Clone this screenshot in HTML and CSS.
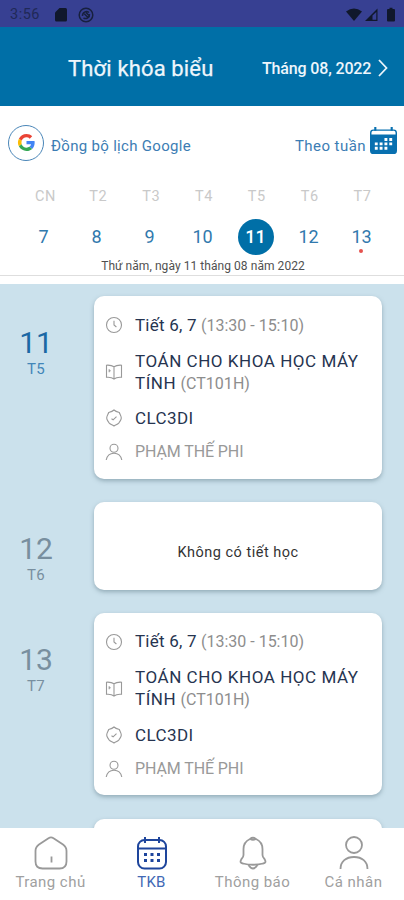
FILE: index.html
```
<!DOCTYPE html>
<html lang="vi">
<head>
<meta charset="utf-8">
<title>Thời khóa biểu</title>
<link rel="stylesheet" href="styles.css">
</head>
<body>
<svg class="defs" width="0" height="0">
  <symbol id="clock" viewBox="0 0 18 18"><circle cx="9" cy="9" r="7.5"/><path d="M9 4.8V9l2.4 2"/></symbol>
  <symbol id="book" viewBox="0 0 18 18"><path d="M9 3.8C7 2.4 4.500 2 1.500 2.200V14.300C4.500 14 7 14.400 9 16C11 14.400 13.500 14 16.500 14.300V2.200C13.500 2 11 2.400 9 3.800ZM9 3.800V16M4.200 6.300v3M4.200 7.800h1.500"/></symbol>
  <symbol id="badge" viewBox="0 0 18 18"><path d="M9 1C10.500 2.500 12.300 3 14.300 3.500C15 5.500 16.300 7 16.300 9C16.300 11 15 12 14 13.800C12.500 15.500 10.500 16 9 17C7.500 16 5.500 15.500 4 13.800C3 12 1.700 11 1.700 9C1.700 7 3 5.500 3.700 3.500C5.700 3 7.500 2.500 9 1ZM6.500 9.800l1.600 1L11.500 7.600"/></symbol>
  <symbol id="person" viewBox="0 0 18 18"><circle cx="9" cy="5.300" r="4"/><path d="M1.200 17C2.100 12.800 5.100 10.300 9 10.300S15.900 12.800 16.800 17"/></symbol>
</svg>
<div class="app">
  <div class="status">
    <span class="time">3:56</span>
    <svg class="sd" viewBox="0 0 12 14"><path d="M4.500 0H10.500Q12 0 12 1.500V12Q12 13.500 10.500 13.500H1.500Q0 13.500 0 12V4.500Z"/></svg>
    <svg class="sync" viewBox="0 0 16 16"><circle cx="8" cy="8" r="6.800"/><path d="M4.500 9A4 4 0 0 1 11 5.500M11.500 7A4 4 0 0 1 5.500 11M5.500 6l5 5M8 5.500l3 3"/></svg>
    <svg class="signals" viewBox="0 0 50 16"><path d="M0 4.500Q8 -1.500 16 4.500L8 14Z"/><path d="M19 14L31.500 1.500V14Z"/><path class="cut" d="M26.500 8.500L30.300 5V12.800H26.500Z"/><path d="M42 2h1.500V.800h3V2H48q1 0 1 1V13.500q0 1-1 1h-6q-1 0-1-1V3q0-1 1-1Z"/></svg>
  </div>
  <header class="header">
    <h1>Thời khóa biểu</h1>
    <span class="month">Tháng 08, 2022</span>
    <svg class="chevron" viewBox="0 0 10 18"><path d="M1 1l7.500 8L1 17"/></svg>
  </header>
  <section class="calendar">
    <div class="tools">
      <span class="google"><svg viewBox="0 0 48 48"><path fill="#ea4335" d="M24 9.500c3.500 0 6.700 1.200 9.200 3.600l6.900-6.900C35.900 2.400 30.500 0 24 0 14.600 0 6.500 5.400 2.600 13.200l8 6.200C12.400 13.700 17.700 9.500 24 9.500z"/><path fill="#4285f4" d="M47 24.600c0-1.600-.2-3.100-.4-4.600H24v9h12.900c-.6 3-2.200 5.500-4.700 7.200l7.700 6C44.400 38 47 31.800 47 24.600z"/><path fill="#fbbc05" d="M10.500 28.600a14.500 14.500 0 0 1 0-9.200l-8-6.200a24 24 0 0 0 0 21.600z"/><path fill="#34a853" d="M24 48c6.500 0 11.900-2.100 15.900-5.800l-7.700-6c-2.200 1.500-4.900 2.300-8.200 2.300-6.300 0-11.600-4.200-13.500-9.900l-8 6.200C6.500 42.600 14.600 48 24 48z"/></svg></span>
      <span class="sync-label">Đồng bộ lịch Google</span>
      <span class="week-label">Theo tuần</span>
      <svg class="cal-icon" viewBox="0 0 28 28"><rect x="0" y="2.500" width="28" height="25.500" rx="3.500" fill="#0870b0"/><path d="M1.500 7.800V6q0-2 2-2H24.500q2 0 2 2V7.800Z" fill="#fff"/><path d="M5.500 0V4M22.500 0V4" stroke="#0870b0" stroke-width="2.200"/><path d="M15 11.500h3v3h-3zM20 11.500h3v3h-3zM5 16h3v3H5zM10 16h3v3h-3zM15 16h3v3h-3zM20 16h3v3h-3zM5 20.500h3v3H5zM10 20.500h3v3h-3zM15 20.500h3v3h-3z" fill="#fff"/></svg>
    </div>
    <div class="days names"><span>CN</span><span>T2</span><span>T3</span><span>T4</span><span>T5</span><span>T6</span><span>T7</span></div>
    <div class="days nums"><span>7</span><span>8</span><span>9</span><span>10</span><span class="selected">11</span><span>12</span><span class="marked">13</span></div>
    <div class="full-date"><span>Thứ năm, ngày 11 tháng 08 năm 2022</span></div>
  </section>
  <main class="list">
    <div class="entry">
      <div class="day today"><b>11</b><small>T5</small></div>
      <article class="card">
        <div class="row"><svg><use href="#clock"/></svg><p><span class="period">Tiết 6, 7</span> <i class="hours">(13:30 - 15:10)</i></p></div>
        <div class="row course"><svg><use href="#book"/></svg><p><span class="subject">TOÁN CHO KHOA HỌC MÁY</span><br><span class="subject">TÍNH</span> <i class="code">(CT101H)</i></p></div>
        <div class="row room"><svg><use href="#badge"/></svg><p>CLC3DI</p></div>
        <div class="row teacher"><svg><use href="#person"/></svg><p>PHẠM THẾ PHI</p></div>
      </article>
    </div>
    <div class="entry free">
      <div class="day"><b>12</b><small>T6</small></div>
      <article class="card empty"><span>Không có tiết học</span></article>
    </div>
    <div class="entry">
      <div class="day"><b>13</b><small>T7</small></div>
      <article class="card">
        <div class="row"><svg><use href="#clock"/></svg><p><span class="period">Tiết 6, 7</span> <i class="hours">(13:30 - 15:10)</i></p></div>
        <div class="row course"><svg><use href="#book"/></svg><p><span class="subject">TOÁN CHO KHOA HỌC MÁY</span><br><span class="subject">TÍNH</span> <i class="code">(CT101H)</i></p></div>
        <div class="row room"><svg><use href="#badge"/></svg><p>CLC3DI</p></div>
        <div class="row teacher"><svg><use href="#person"/></svg><p>PHẠM THẾ PHI</p></div>
      </article>
    </div>
    <div class="entry"><div class="day"></div><article class="card"></article></div>
  </main>
  <nav class="nav">
    <a class="home"><svg viewBox="0 0 34 34"><path d="M14.500 2.200Q17 .600 19.500 2.200L29 8.500Q32.500 11 32.500 15V25.500Q32.500 32.500 25.500 32.500H8.500Q1.500 32.500 1.500 25.500V15Q1.500 11 5 8.500Z"/><path d="M17.500 20.500V26.500"/></svg><span>Trang chủ</span></a>
    <a class="active"><svg viewBox="0 0 34 34"><rect x="3" y="4" width="28" height="28.500" rx="6.500"/><path d="M3 12.500H31M10 1V7M24 1V7"/><path class="dots" d="M9 18.500h3M15.500 18.500h3M22 18.500h3M9 24.500h3M15.500 24.500h3M22 24.500h3"/></svg><span>TKB</span></a>
    <a class="alerts"><svg viewBox="0 0 34 34"><path d="M14 3Q17 .500 20 3Q26.500 6 26.500 13V19Q26.500 21 28.500 23Q31 27 27 27.500Q17 30 7 27.500Q3 27 5.500 23Q7.500 21 7.500 19V13Q7.500 6 14 3Z"/><path d="M12.500 29Q17 36 21.500 29M14 3Q17 4.500 20 3"/></svg><span>Thông báo</span></a>
    <a class="profile"><svg viewBox="0 0 34 34"><circle cx="17" cy="9" r="8"/><path d="M3.500 33C3.500 25.500 9 21 17 21S30.500 25.500 30.500 33"/></svg><span>Cá nhân</span></a>
  </nav>
</div>
</body>
</html>
```
FILE: styles.css
```
* { box-sizing: border-box; }
body { margin: 0; font-family: Roboto, sans-serif; color: #263450; background: #fff; }
svg { display: block; flex: none; fill: none; overflow: visible; }
h1, p { margin: 0; font-weight: 400; }
i { font-style: normal; }
.defs { position: absolute; }
.app { width: 404px; height: 900px; display: flex; flex-direction: column; overflow: hidden; }

.status { height: 27px; flex: none; display: flex; align-items: center; padding: 2px 8px 0 10px; background: #374092; color: #202957; }
.time { width: 45px; font-size: 14.5px; letter-spacing: .5px; }
.sd { width: 12px; height: 14px; margin-right: 11px; fill: #10182c; }
.sync { width: 16px; height: 16px; stroke: #17203e; stroke-width: 1.5; }
.signals { width: 50px; height: 16px; margin-left: auto; fill: #10182c; }
.signals .cut { fill: #374092; }

.header { height: 79px; flex: none; display: flex; align-items: center; padding: 3px 16px 0 68px; background: #006fa7; color: #eef6fc; }
.header h1 { width: 194px; font-size: 22px; letter-spacing: .15px; white-space: nowrap; -webkit-text-stroke: .25px; }
.month { font-size: 16px; font-weight: 500; letter-spacing: -.15px; white-space: nowrap; }
.chevron { width: 10px; height: 18px; margin-left: auto; stroke: #e9f4fb; stroke-width: 1.8; }

.calendar { height: 178px; flex: none; background: #fff; }
.tools { height: 73px; display: flex; align-items: center; padding: 0 7px 0 8px; color: #3c7db4; font-size: 15px; letter-spacing: .3px; }
.google { width: 36px; height: 36px; border: 1.3px solid #4a86b8; border-radius: 50%; display: grid; place-items: center; margin-right: 7px; }
.google svg { width: 17px; height: 17px; }
.sync-label, .week-label { padding-top: 7px; white-space: nowrap; }
.week-label { margin-left: auto; margin-right: 4px; letter-spacing: .45px; }
.cal-icon { width: 27px; height: 27px; margin-top: -5px; }
.days { display: grid; grid-template-columns: repeat(7, 1fr); padding: 0 16px 0 17px; text-align: center; align-items: center; justify-items: center; }
.names { height: 34px; padding: 0 15px 0 19px; font-size: 14.5px; color: #c9c9c9; letter-spacing: .6px; }
.nums { height: 47px; font-size: 18px; color: #3179ad; }
.selected { width: 36px; height: 36px; line-height: 36px; border-radius: 50%; background: #006fa7; color: #fff; font-weight: 500; }
.marked { position: relative; }
.marked::after { content: ""; position: absolute; left: 8px; bottom: -6px; width: 4px; height: 4px; border-radius: 50%; background: #e5524e; }
.full-date { height: 16px; line-height: 13px; border-bottom: 1px solid #dedede; text-align: center; font-size: 12px; letter-spacing: .06px; color: #505050; white-space: nowrap; padding-left: 2px; }

.list { flex: 1; min-height: 0; overflow: hidden; padding-top: 12px; background: #cbe1ec; }
.entry { height: 206px; display: flex; padding-left: 10px; }
.entry.free { height: 110.5px; }
.day { width: 84px; padding: 29px 32px 0 0; display: flex; flex-direction: column; align-items: center; color: #788f9f; }
.day b { font-size: 30px; line-height: 36px; font-weight: 400; }
.day small { font-size: 15px; line-height: 17px; letter-spacing: .4px; }
.today { color: #1b68a4; }
.today small { color: #4286b8; }
.card { width: 288px; height: 182.5px; padding: 17px 11px 0 11px; border-radius: 10px; background: #fff; box-shadow: 0 2px 4px #5c778580; }
.card.empty { height: 88px; padding: 13px 0 0; text-align: center; line-height: 75px; font-size: 14.5px; letter-spacing: .5px; color: #333; }
.row { display: flex; align-items: center; height: 24px; font-size: 17px; line-height: 22px; white-space: nowrap; }
.row svg { width: 18px; height: 18px; margin-right: 12px; stroke: #999; stroke-width: 1.1; }
.period { letter-spacing: .22px; }
.subject { letter-spacing: .54px; }
.hours, .code { color: #8d8d8d; font-size: 16px; }
.code { letter-spacing: .05px; }
.course { height: 44px; margin-top: 13px; }
.room { margin-top: 12px; }
.room p { letter-spacing: .4px; }
.teacher { margin-top: 10px; font-size: 16px; letter-spacing: -.1px; color: #999; }

.nav { height: 72px; flex: none; position: relative; display: grid; grid-template-columns: repeat(4, 1fr); background: #fff; color: #a0a0a0; }
.nav a { display: flex; flex-direction: column; align-items: center; padding-top: 8px; font-size: 15px; line-height: 18px; letter-spacing: .45px; white-space: nowrap; }
.nav svg { width: 34px; height: 34px; margin-bottom: 3px; stroke: #999; stroke-width: 1.8; }
.nav .active { color: #4269b5; letter-spacing: .2px; }
.nav .active svg { stroke: #1e459c; stroke-width: 2; }
.nav .dots { stroke-width: 3; }
```
